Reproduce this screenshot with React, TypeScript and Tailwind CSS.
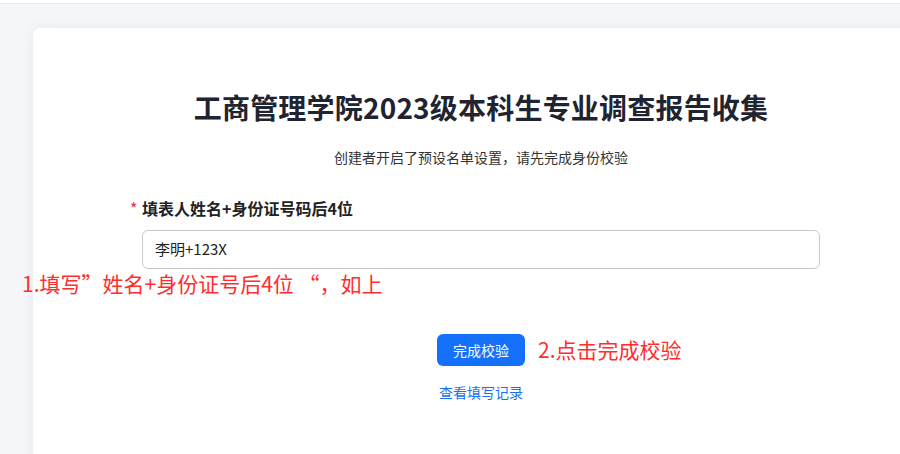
const App = () => {
  return (
    <div className="relative w-[900px] h-[454px] overflow-hidden bg-[#f5f6f9] font-['Noto_Sans_CJK_SC','Noto_Sans',sans-serif]">
      {/* top strip */}
      <div className="h-[4px] bg-white border-b border-[#e6e7ea]" />

      {/* card */}
      <div className="ml-[33px] mt-[24px] w-[896px] h-[500px] bg-white rounded-lg shadow-[0_0_14px_rgba(0,0,0,0.06)] pt-[61px] flex flex-col items-center">
        <h1 className="text-[28px] leading-[36px] font-bold text-[#1f2430] tracking-[0.2px]">
          工商管理学院2023级本科生专业调查报告收集
        </h1>
        <p className="mt-[22px] text-[14px] leading-[20px] text-[#333]">
          创建者开启了预设名单设置，请先完成身份校验
        </p>

        <div className="mt-[29px] w-[678px]">
          <div className="relative text-[16px] leading-[24px] font-bold text-[#222]">
            <span className="absolute -left-[12px] top-0 text-[#e0304a] font-normal">*</span>
            填表人姓名+身份证号码后4位
          </div>
          <div className="mt-[10px] h-[39px] border border-[#c9c9c9] rounded-md flex items-center px-[12px] text-[15px] text-[#222]">
            李明+123X
          </div>
        </div>

        <button className="mt-[65px] w-[88px] h-[32px] rounded-md bg-[#1570fb] text-white text-[14px]">
          完成校验
        </button>
        <a className="mt-[16px] text-[14px] leading-[20px] text-[#1a6ff0] cursor-pointer">
          查看填写记录
        </a>
      </div>

      {/* annotations */}
      <div className="absolute left-[22px] top-[269px] text-[21px] leading-[28px] text-[#ff2d2d]">
        1.填写”姓名+身份证号后4位 “，如上
      </div>
      <div className="absolute left-[538px] top-[335px] text-[21px] leading-[28px] text-[#ff2d2d]">
        2.点击完成校验
      </div>
    </div>
  );
};

export default App;
